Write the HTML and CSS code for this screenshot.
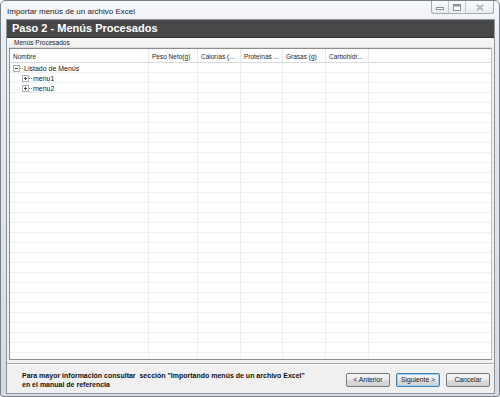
FILE: index.html
```html
<!DOCTYPE html>
<html lang="es">
<head>
    <meta charset="UTF-8">
    <title>Importar menús de un archivo Excel</title>
    <link rel="stylesheet" href="styles.css">
</head>
<body>
    <div class="window">
        <div class="titlebar">
            <span class="title">Importar menús de un archivo Excel</span>
            <div class="caption">
                <span class="cap cap_min">
                    <svg width="8" height="6" viewBox="0 0 8 6"><rect x="0.5" y="3.5" width="7" height="2" fill="#fff" stroke="#8a94a0"/></svg>
                </span>
                <span class="cap cap_max">
                    <svg width="8" height="7" viewBox="0 0 8 7"><rect x="0.5" y="0.5" width="7" height="6" fill="#fff" stroke="#8a94a0"/><rect x="1" y="1" width="6" height="1.5" fill="#8a94a0"/></svg>
                </span>
                <span class="cap cap_close">
                    <svg width="8" height="7" viewBox="0 0 8 7"><path d="M1 0.8 L7 6.2 M7 0.8 L1 6.2" stroke="#8a94a0" stroke-width="1.5"/><path d="M1 0.8 L7 6.2 M7 0.8 L1 6.2" stroke="#fff" stroke-width="0.4"/></svg>
                </span>
            </div>
        </div>
        <div class="client">
            <div class="banner">Paso 2 - Menús Procesados</div>
            <div class="group">
                <div class="group_label">Menús Procesados</div>
                <div class="list">
                    <div class="list_head">
                        <span class="col">Nombre</span>
                        <span class="col">Peso Neto(g)</span>
                        <span class="col">Calorías (...</span>
                        <span class="col">Proteínas ...</span>
                        <span class="col">Grasas (g)</span>
                        <span class="col">Carbohidr...</span>
                        <span class="col col_last"></span>
                    </div>
                    <div class="list_body">
                        <div class="cell">
                            <div class="node">
                                <svg class="box" width="7" height="7" viewBox="0 0 7 7"><rect x="0.5" y="0.5" width="6" height="6" fill="#fff" stroke="#aab2bc"/><path d="M2 3.5 H5" stroke="#4a4a4a"/></svg>
                                <span class="dots"></span>Listado de Menús
                            </div>
                            <div class="node child">
                                <svg class="box" width="7" height="7" viewBox="0 0 7 7"><rect x="0.5" y="0.5" width="6" height="6" fill="#fff" stroke="#aab2bc"/><path d="M2 3.5 H5 M3.5 2 V5" stroke="#4a4a4a"/></svg>
                                <span class="dots"></span>menu1
                            </div>
                            <div class="node child">
                                <svg class="box" width="7" height="7" viewBox="0 0 7 7"><rect x="0.5" y="0.5" width="6" height="6" fill="#fff" stroke="#aab2bc"/><path d="M2 3.5 H5 M3.5 2 V5" stroke="#4a4a4a"/></svg>
                                <span class="dots"></span>menu2
                            </div>
                        </div>
                        <div class="cell"></div>
                        <div class="cell"></div>
                        <div class="cell"></div>
                        <div class="cell"></div>
                        <div class="cell"></div>
                        <div class="cell cell_last"></div>
                    </div>
                </div>
            </div>
            <div class="footer">
                <p class="info">Para mayor información consultar&nbsp; sección "Importando menús de un archivo Excel"<br>en el manual de referencia</p>
                <div class="buttons">
                    <button class="btn">&lt; Anterior</button>
                    <button class="btn btn_default">Siguiente &gt;</button>
                    <button class="btn">Cancelar</button>
                </div>
            </div>
        </div>
    </div>
</body>
</html>
```

FILE: styles.css
```css
* {
    margin: 0;
    padding: 0;
    box-sizing: border-box;
}

body {
    width: 500px;
    height: 397px;
    background: #fff;
    font-family: "Liberation Sans", Arial, sans-serif;
    overflow: hidden;
}

.window {
    display: flex;
    flex-direction: column;
    width: 500px;
    height: 397px;
    border: 1px solid #7a7f86;
    border-radius: 5px 5px 3px 3px;
    background: linear-gradient(#f7f8fa, #e9ecf0 40px, #d6dbe1);
    padding: 0 4px 2px 5px;
}

.titlebar {
    display: flex;
    align-items: flex-start;
    height: 18px;
}

.title {
    font-size: 8px;
    color: #1a1a1a;
    padding: 6px 0 0 1px;
}

.caption {
    display: flex;
    margin-left: auto;
    margin-right: 1px;
    border: 1px solid #a3abb5;
    border-top: none;
    border-radius: 0 0 3px 3px;
    background: linear-gradient(#fbfcfd, #e8ebef);
}

.cap {
    display: flex;
    align-items: center;
    justify-content: center;
    height: 12px;
    border-left: 1px solid #c4cad2;
}

.cap_min {
    width: 16px;
    border-left: none;
}

.cap_max {
    width: 17px;
}

.cap_close {
    width: 28px;
}

.client {
    flex: 1;
    display: flex;
    flex-direction: column;
    background: #f0f0f0;
    border: 1px solid #8d949c;
}

.banner {
    height: 18px;
    background: #484848;
    color: #fff;
    font-weight: bold;
    font-size: 11px;
    padding: 2px 0 0 5px;
    border-bottom: 1px solid #2e2e2e;
}

.group {
    flex: 1;
    display: flex;
    flex-direction: column;
    padding: 0 2px 0 2px;
    background: linear-gradient(#f7f7f7, #f0f0f0 10px);
}

.group_label {
    height: 10px;
    font-size: 6.5px;
    color: #222;
    padding: 1px 0 0 5px;
    border-bottom: 1px solid #d9d9d9;
}

.list {
    flex: 1;
    display: flex;
    flex-direction: column;
    background: #fff;
    border: 1px solid #8c8c8c;
    border-right-color: #bdbdbd;
    margin-bottom: 3px;
}

.list_head,
.list_body {
    display: grid;
    grid-template-columns: 139px 49px 43px 42px 43px 43px 1fr;
}

.list_head {
    height: 14px;
    border-bottom: 1px solid #d8dce0;
}

.col {
    font-size: 6.5px;
    color: #1e1e1e;
    padding: 4px 0 0 3px;
    border-right: 1px solid #e4e6e8;
    white-space: nowrap;
    overflow: hidden;
}

.col_last {
    border-right: none;
}

.list_body {
    flex: 1;
    background: repeating-linear-gradient(#fff 0, #fff 9px, #f0f0f0 9px, #f0f0f0 10px);
}

.cell {
    border-right: 1px solid #f0f0f0;
}

.cell_last {
    border-right: none;
}

.node {
    display: flex;
    align-items: center;
    height: 10px;
    font-size: 7px;
    color: #1a1a1a;
    padding-left: 3px;
}

.node.child {
    padding-left: 12px;
}

.box {
    display: block;
}

.dots {
    width: 3px;
    border-top: 1px dotted #8a8a8a;
    margin-right: 1px;
}

.footer {
    height: 30px;
    display: flex;
    align-items: center;
    border-top: 1px solid #a8a8a8;
    box-shadow: inset 0 1px 0 #fff;
    background: #f0f0f0;
    padding: 0 4px 0 15px;
}

.info {
    font-size: 7px;
    font-weight: bold;
    color: #111;
    line-height: 9px;
    padding-top: 2px;
}

.buttons {
    display: flex;
    gap: 6px;
    margin-left: auto;
    padding-top: 2px;
}

.btn {
    width: 44px;
    height: 14px;
    font-family: "Liberation Sans", Arial, sans-serif;
    font-size: 6.8px;
    color: #1a1a1a;
    border: 1px solid #7a7a7a;
    border-radius: 2px;
    background: linear-gradient(#f4f4f4, #ebebeb 50%, #dcdcdc 51%, #d0d0d0);
}

.btn_default {
    border-color: #3c7fb1;
    box-shadow: inset 0 0 0 1px #9fd3f3;
}
```
